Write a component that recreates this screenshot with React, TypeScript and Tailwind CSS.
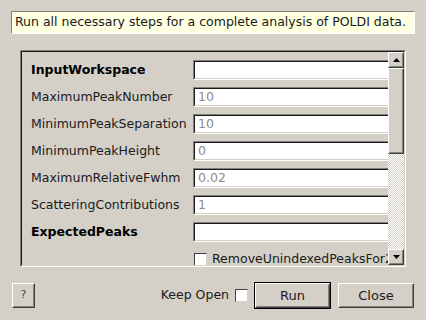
import React from "react";

const rows: { label: string; value: string; bold?: boolean }[] = [
  { label: "InputWorkspace", value: "", bold: true },
  { label: "MaximumPeakNumber", value: "10" },
  { label: "MinimumPeakSeparation", value: "10" },
  { label: "MinimumPeakHeight", value: "0" },
  { label: "MaximumRelativeFwhm", value: "0.02" },
  { label: "ScatteringContributions", value: "1" },
  { label: "ExpectedPeaks", value: "", bold: true },
];

function Raised({ className, children }: { className?: string; children?: React.ReactNode }) {
  return (
    <div className={`border border-t-white border-l-white border-b-[#404040] border-r-[#404040] bg-[#d4d0c8] ${className ?? ""}`}>
      <div className="w-full h-full border border-t-[#d4d0c8] border-l-[#d4d0c8] border-b-[#808080] border-r-[#808080] flex items-center justify-center">
        {children}
      </div>
    </div>
  );
}

export default function App() {
  return (
    <div
      className="w-[426px] h-[320px] bg-[#d4d0c8] flex flex-col text-[12.5px] text-[#1a1a1a] overflow-hidden"
      style={{ fontFamily: '"DejaVu Sans", sans-serif' }}
    >
      {/* description */}
      <div className="mx-[11px] mt-[11px] h-[23px] w-[404px] bg-[#ffffe1] border border-t-[#808080] border-l-[#808080] border-b-white border-r-white flex items-center pl-[3px] whitespace-nowrap">
        Run all necessary steps for a complete analysis of POLDI data.
      </div>

      {/* property frame */}
      <div className="ml-[20px] mt-[16px] w-[386px] h-[217px] border border-t-[#808080] border-l-[#808080] border-b-white border-r-white">
        <div className="w-full h-full border border-t-[#1a1a1a] border-l-[#1a1a1a] border-b-[#d4d0c8] border-r-[#d4d0c8] flex">
          <div className="flex-1 overflow-hidden pl-[9px] pt-[8px] flex flex-col gap-[7px]">
            {rows.map((r) => (
              <div key={r.label} className="flex items-center h-[20px] shrink-0">
                <div className={`w-[162px] shrink-0 whitespace-nowrap ${r.bold ? "font-bold text-black" : ""}`}>{r.label}</div>
                <div className="w-[220px] shrink-0 h-[20px] border border-t-[#808080] border-l-[#808080] border-b-white border-r-white">
                  <div className="w-full h-full bg-white border border-t-[#1a1a1a] border-l-[#1a1a1a] border-b-[#d4d0c8] border-r-[#d4d0c8] pl-[3px] flex items-center text-[#8c8c8c]">
                    {r.value}
                  </div>
                </div>
              </div>
            ))}
            <div className="flex items-center h-[13px] shrink-0 pl-[163px] mt-[4px] gap-[5px] whitespace-nowrap">
              <div className="w-[13px] h-[13px] bg-white border border-t-[#404040] border-l-[#404040] border-b-[#d4d0c8] border-r-[#d4d0c8] shrink-0" />
              <span>RemoveUnindexedPeaksFor2θ</span>
            </div>
          </div>

          {/* scrollbar */}
          <div className="w-[16px] shrink-0 flex flex-col bg-[repeating-conic-gradient(#d4d0c8_0_25%,#ffffff_0_50%)] bg-[length:2px_2px]">
            <Raised className="h-[16px] shrink-0">
              <svg width="7" height="4" viewBox="0 0 7 4"><path d="M3.5 0 L7 4 L0 4 Z" fill="#000" /></svg>
            </Raised>
            <Raised className="h-[86px] shrink-0" />
            <div className="flex-1" />
            <Raised className="h-[16px] shrink-0">
              <svg width="7" height="4" viewBox="0 0 7 4"><path d="M0 0 L7 0 L3.5 4 Z" fill="#000" /></svg>
            </Raised>
          </div>
        </div>
      </div>

      {/* buttons */}
      <div className="flex items-center mt-[15px] pl-[12px] pr-[12px]">
        <Raised className="w-[23px] h-[25px] text-[11px] text-[#444]">?</Raised>
        <div className="flex-1" />
        <span>Keep Open</span>
        <div className="ml-[6px] w-[13px] h-[13px] bg-white border border-t-[#404040] border-l-[#404040] border-b-[#d4d0c8] border-r-[#d4d0c8]" />
        <div className="ml-[6px] border border-black">
          <Raised className="w-[75px] h-[25px] text-[13px]">Run</Raised>
        </div>
        <Raised className="ml-[7px] w-[76px] h-[25px] text-[13px]">Close</Raised>
      </div>
    </div>
  );
}
